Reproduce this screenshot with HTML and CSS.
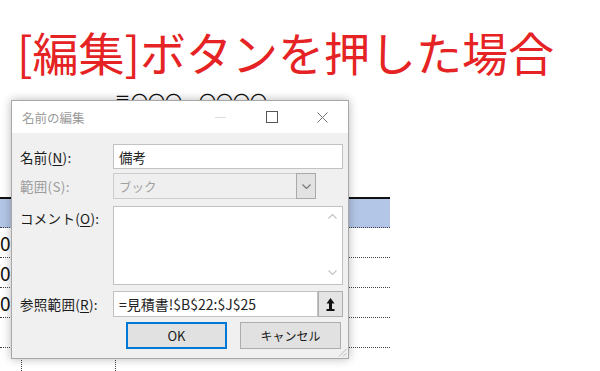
FILE: index.html
```html
<!DOCTYPE html>
<html lang="ja">
<head>
    <meta charset="UTF-8">
    <meta name="viewport" content="width=device-width, initial-scale=1.0">
    <title>名前の編集</title>
    <link rel="stylesheet" href="styles.css">
</head>
<body>
    <h1 class="heading">[編集]ボタンを押した場合</h1>

    <div class="stage">
        <div class="sheet">
            <div class="postal">〒〇〇〇－〇〇〇〇</div>
            <div class="grid">
                <div class="row head"><span class="cell c1"></span><span class="cell c2"></span><span class="cell c3"></span></div>
                <div class="row"><span class="cell c1">0</span><span class="cell c2"></span><span class="cell c3"></span></div>
                <div class="row"><span class="cell c1">0</span><span class="cell c2"></span><span class="cell c3"></span></div>
                <div class="row"><span class="cell c1">0</span><span class="cell c2"></span><span class="cell c3"></span></div>
                <div class="row"><span class="cell c1"></span><span class="cell c2"></span><span class="cell c3"></span></div>
                <div class="row"><span class="cell c1"></span><span class="cell c2"></span><span class="cell c3"></span></div>
            </div>
        </div>

        <div class="dialog">
            <div class="titlebar">
                <span class="caption">名前の編集</span>
                <span class="winbtn min"><i></i></span>
                <span class="winbtn max"><i></i></span>
                <span class="winbtn close">
                    <svg width="11" height="11" viewBox="0 0 11 11"><path d="M0.5 0.5 L10.5 10.5 M10.5 0.5 L0.5 10.5" stroke="#777" stroke-width="1" fill="none"/></svg>
                </span>
            </div>

            <div class="body">
                <div class="field-row r-name">
                    <label class="label">名前(<u>N</u>):</label>
                    <div class="input wide">備考</div>
                </div>

                <div class="field-row r-scope">
                    <label class="label off">範囲(S):</label>
                    <div class="select">
                        <span class="select-text">ブック</span>
                        <span class="drop">
                            <svg width="9" height="5" viewBox="0 0 9 5"><path d="M0.5 0.5 L4.5 4.5 L8.5 0.5" stroke="#777" stroke-width="1.2" fill="none"/></svg>
                        </span>
                    </div>
                </div>

                <div class="field-row r-comment">
                    <label class="label">コメント(<u>O</u>):</label>
                    <div class="textarea">
                        <div class="scroll">
                            <svg width="9" height="5" viewBox="0 0 9 5"><path d="M0.5 4.5 L4.5 0.5 L8.5 4.5" stroke="#c4c4c4" stroke-width="1.2" fill="none"/></svg>
                            <svg width="9" height="5" viewBox="0 0 9 5"><path d="M0.5 0.5 L4.5 4.5 L8.5 0.5" stroke="#c4c4c4" stroke-width="1.2" fill="none"/></svg>
                        </div>
                    </div>
                </div>

                <div class="field-row r-ref">
                    <label class="label">参照範囲(<u>R</u>):</label>
                    <div class="input ref">=見積書!$B$22:$J$25</div>
                    <span class="collapse">
                        <svg width="9" height="15" viewBox="0 0 9 15"><path d="M4.5 1 L8.5 6.5 L0.5 6.5 Z" fill="#111"/><rect x="3" y="6" width="3" height="6" fill="#111"/><rect x="0.5" y="12" width="8" height="2" fill="#111"/></svg>
                    </span>
                </div>

                <div class="buttons">
                    <button class="btn default">OK</button>
                    <button class="btn cancel">キャンセル</button>
                </div>

                <span class="grip">
                    <svg width="10" height="10" viewBox="0 0 10 10"><path d="M9.5 2 L2 9.5 M9.5 6 L6 9.5" stroke="#b8b8b8" stroke-width="1" fill="none"/></svg>
                </span>
            </div>
        </div>
    </div>
</body>
</html>
```

FILE: styles.css
```css
body {
    margin: 0;
    width: 600px;
    height: 371px;
    overflow: hidden;
    background: #fff;
    font-family: "Noto Sans CJK JP", "Noto Sans", sans-serif;
}
.heading {
    margin: 0;
    padding: 26px 0 0 17px;
    height: 51px;
    font-size: 46px;
    line-height: 50px;
    font-weight: 400;
    color: #e62324;
    white-space: nowrap;
}
.stage {
    position: relative;
}

/* spreadsheet behind the dialog */
.sheet {
    width: 390px;
}
.postal {
    padding: 15px 0 0 114px;
    font-size: 17px;
    line-height: 17px;
    color: #111;
    white-space: nowrap;
}
.grid {
    margin-top: 88px;
}
.row {
    display: grid;
    grid-template-columns: 21px 94px 1fr;
    height: 29px;
    border-bottom: 1px dotted #444;
}
.row.head {
    height: 28px;
    border-top: 2px solid #111;
    background: #b4c6e7;
}
.cell + .cell {
    border-left: 1px dotted #444;
}
.c1 {
    display: flex;
    align-items: center;
    font-size: 19px;
    color: #111;
}

/* dialog */
.dialog {
    position: absolute;
    left: 11px;
    top: 23px;
    width: 338px;
    height: 259px;
    box-sizing: border-box;
    border: 1px solid #a8a8a8;
    background: #f0f0f0;
    box-shadow: 0 0 9px rgba(0, 0, 0, 0.28);
}
.titlebar {
    display: flex;
    align-items: center;
    height: 32px;
    background: #fff;
}
.caption {
    padding-left: 10px;
    font-size: 12.5px;
    color: #9a9a9a;
    flex: 1;
}
.winbtn {
    width: 51px;
    height: 32px;
    display: flex;
    align-items: center;
    justify-content: center;
}
.min i {
    width: 11px;
    height: 1px;
    background: #dcdcdc;
}
.max i {
    width: 10px;
    height: 10px;
    border: 1px solid #555;
}
.body {
    position: relative;
    height: 225px;
    padding: 11px 5px 0 8px;
    box-sizing: border-box;
    font-size: 13.5px;
    color: #1a1a1a;
}
.field-row {
    display: flex;
    align-items: center;
}
.label {
    width: 93px;
    flex: none;
    white-space: nowrap;
    letter-spacing: 0.3px;
}
.label u {
    text-underline-offset: 2px;
}
.label.off {
    color: #9d9d9d;
}
.input {
    height: 25px;
    box-sizing: border-box;
    border: 1px solid #c2c2c2;
    background: #fff;
    padding: 0 5px;
    display: flex;
    align-items: center;
    font-size: 13.5px;
    color: #222;
    white-space: nowrap;
}
.input.wide {
    width: 230px;
}
.r-scope {
    margin-top: 4px;
}
.select {
    width: 203px;
    height: 26px;
    box-sizing: border-box;
    border: 1px solid #cdcdcd;
    background: #efefef;
    display: flex;
    align-items: stretch;
}
.select-text {
    flex: 1;
    padding-left: 5px;
    display: flex;
    align-items: center;
    color: #a0a0a0;
    font-size: 12.5px;
}
.drop {
    width: 18px;
    border: 1px solid #a9a9a9;
    background: #e2e2e2;
    margin: -1px -1px -1px 0;
    display: flex;
    align-items: center;
    justify-content: center;
}
.r-comment {
    margin-top: 7px;
    align-items: flex-start;
}
.r-comment .label {
    padding-top: 2px;
}
.textarea {
    width: 230px;
    height: 79px;
    box-sizing: border-box;
    border: 1px solid #c2c2c2;
    background: #fff;
    display: flex;
    justify-content: flex-end;
}
.scroll {
    width: 19px;
    display: flex;
    flex-direction: column;
    justify-content: space-between;
    align-items: center;
    padding: 7px 0 9px;
}
.r-ref {
    margin-top: 6px;
}
.input.ref {
    width: 205px;
    height: 26px;
    font-size: 14px;
}
.collapse {
    width: 25px;
    height: 26px;
    box-sizing: border-box;
    border: 1px solid #adadad;
    background: #e4e4e4;
    display: flex;
    align-items: center;
    justify-content: center;
}
.buttons {
    display: flex;
    gap: 13px;
    margin-top: 5px;
    padding-left: 106px;
}
.btn {
    width: 101px;
    height: 27px;
    box-sizing: border-box;
    border: 1px solid #adadad;
    background: #e1e1e1;
    font-family: inherit;
    font-size: 13px;
    color: #1a1a1a;
    padding: 0;
}
.btn.default {
    border: 2px solid #0078d7;
}
.btn.cancel {
    font-size: 12px;
}
.grip {
    position: absolute;
    right: 1px;
    bottom: 1px;
    display: flex;
}
```
